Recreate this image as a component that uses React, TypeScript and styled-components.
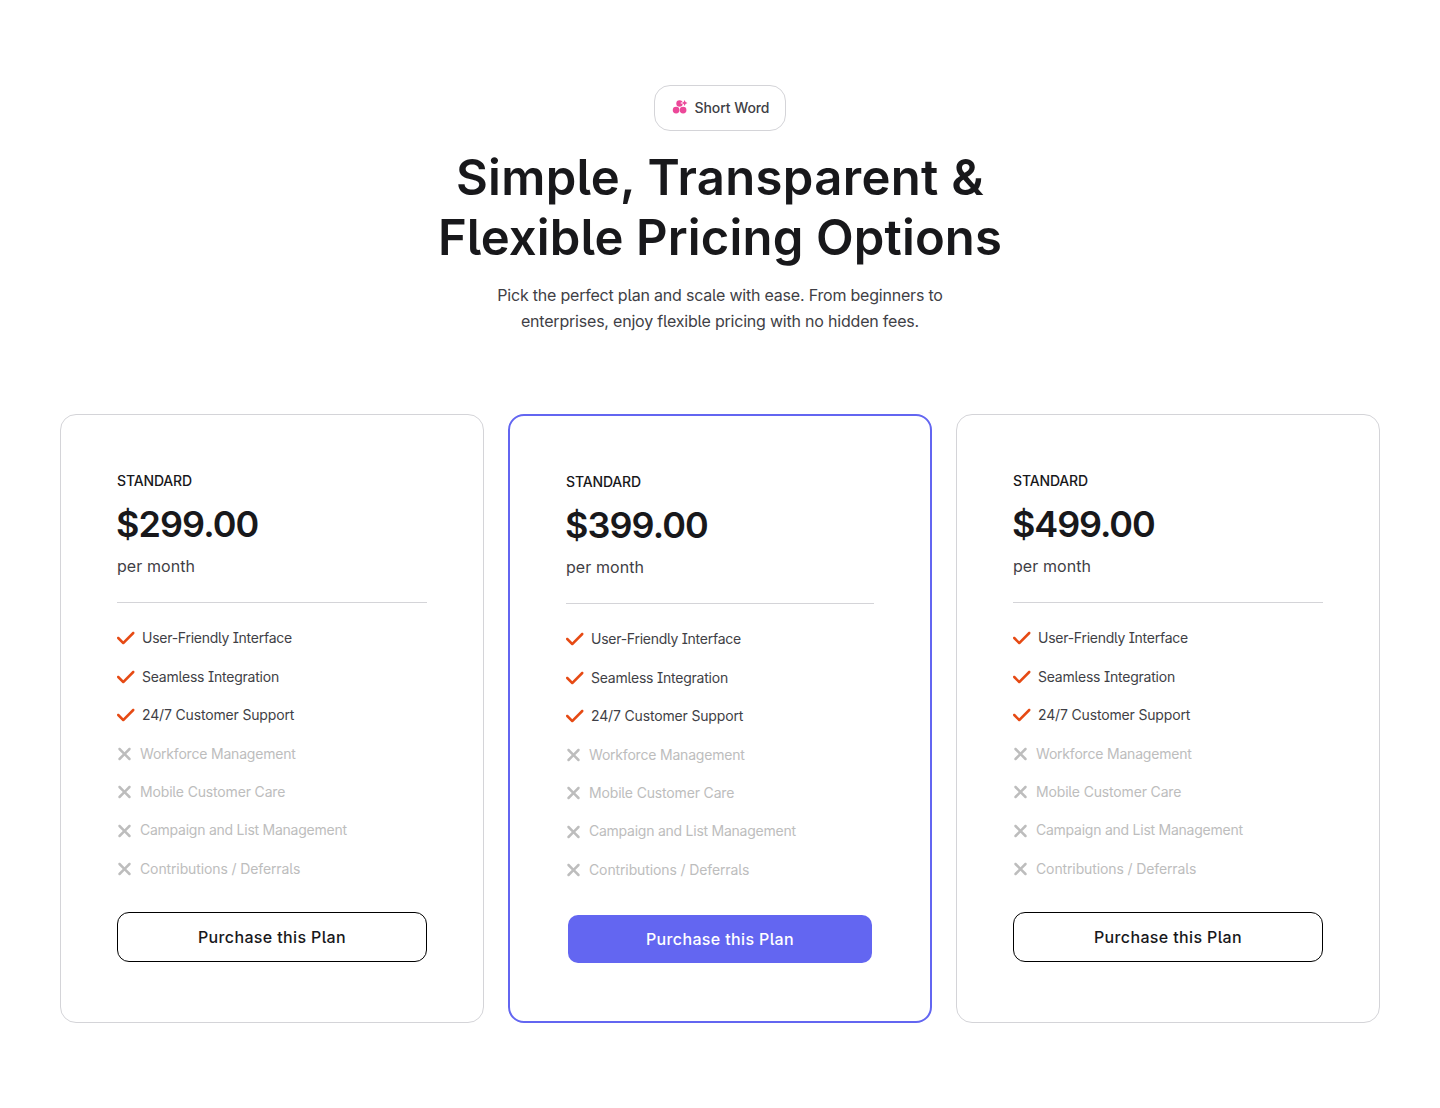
import styled, { createGlobalStyle } from 'styled-components';
import { FaCheck, FaXmark } from 'react-icons/fa6';

interface Feature {
  label: string;
  included: boolean;
  tracking: number; // letter spacing in px
}

interface Plan {
  name: string;
  price: string;
  tracking: number;
  highlighted?: boolean;
}

const FEATURES: Feature[] = [
  { label: 'User-Friendly Interface', included: true, tracking: -0.255 },
  { label: 'Seamless Integration', included: true, tracking: -0.22 },
  { label: '24/7 Customer Support', included: true, tracking: -0.16 },
  { label: 'Workforce Management', included: false, tracking: -0.2 },
  { label: 'Mobile Customer Care', included: false, tracking: -0.16 },
  { label: 'Campaign and List Management', included: false, tracking: -0.245 },
  { label: 'Contributions / Deferrals', included: false, tracking: -0.118 },
];

const PLANS: Plan[] = [
  { name: 'STANDARD', price: '$299.00', tracking: -0.92 },
  { name: 'STANDARD', price: '$399.00', tracking: -0.93, highlighted: true },
  { name: 'STANDARD', price: '$499.00', tracking: -1.11 },
];

function ClusterIcon() {
  return (
    <svg width="16" height="16" viewBox="0 0 16 16" fill="#ec4899">
      <circle cx="4.1" cy="11.1" r="3.35" />
      <circle cx="11.1" cy="11.1" r="3.35" />
      <circle cx="7.5" cy="4.5" r="3.2" />
      <path
        d="M12.6 1.1l.9 2 2 .9-2 .9-.9 2-.9-2-2-.9 2-.9z"
        stroke="#fff"
        strokeWidth="1.2"
        paintOrder="stroke"
      />
    </svg>
  );
}

function PlanCard({ plan }: { plan: Plan }) {
  return (
    <Card $highlighted={plan.highlighted}>
      <PlanName>{plan.name}</PlanName>
      <Price $tracking={plan.tracking}>{plan.price}</Price>
      <Period>per month</Period>
      <Divider />

      <FeatureList>
        {FEATURES.map((feature) => (
          <FeatureItem key={feature.label} $included={feature.included} $tracking={feature.tracking}>
            {feature.included ? <CheckIcon /> : <CrossIcon />}
            {feature.label}
          </FeatureItem>
        ))}
      </FeatureList>

      <PurchaseButton $highlighted={plan.highlighted}>Purchase this Plan</PurchaseButton>
    </Card>
  );
}

export default function App() {
  return (
    <Page>
      <GlobalStyle />
      <Header>
        <Badge>
          <ClusterIcon />
          Short Word
        </Badge>
        <Title>
          <TitleLine $tracking={0.33}>Simple, Transparent &amp;</TitleLine>
          <TitleLine $tracking={0.15}>Flexible Pricing Options</TitleLine>
        </Title>
        <Description>
          Pick the perfect plan and scale with ease. From beginners to
          <br />
          enterprises, enjoy flexible pricing with no hidden fees.
        </Description>
      </Header>

      <Plans>
        {PLANS.map((plan) => (
          <PlanCard key={plan.price} plan={plan} />
        ))}
      </Plans>
    </Page>
  );
}

const GlobalStyle = createGlobalStyle`
  * {
    box-sizing: border-box;
  }

  body {
    margin: 0;
    background: #fff;
    color: #18181b;
    font-family: Inter, 'Liberation Sans', sans-serif;
    font-feature-settings: 'cv05', 'cv08';
  }
`;

const Page = styled.main`
  padding: 85px 60px;
`;

const Header = styled.header`
  display: flex;
  flex-direction: column;
  align-items: center;
  text-align: center;
`;

const Badge = styled.div`
  display: flex;
  align-items: center;
  gap: 6.5px;
  height: 46px;
  padding: 0 15.5px 2px 17px;
  border: 1px solid #d4d4d8;
  border-radius: 16px;
  color: #3f3f46;
  font-size: 14px;
  font-weight: 500;
  letter-spacing: -0.08px;
`;

const Title = styled.h1`
  margin: 17px 0 0;
  font-size: 49px;
  font-weight: 600;
  line-height: 60px;
`;

const TitleLine = styled.span<{ $tracking: number }>`
  display: block;
  letter-spacing: ${(props) => props.$tracking}px;
`;

const Description = styled.p`
  margin: 15px 0 0;
  color: #3f3f46;
  font-size: 16px;
  line-height: 25.6px;
  letter-spacing: -0.205px;
`;

const Plans = styled.section`
  display: grid;
  grid-template-columns: repeat(3, 1fr);
  gap: 24px;
  margin-top: 80px;
`;

const Card = styled.article<{ $highlighted?: boolean }>`
  display: flex;
  flex-direction: column;
  padding: 56px;
  border: ${(props) => (props.$highlighted ? '2px solid #6366f1' : '1px solid #d4d4d8')};
  border-radius: 16px;
`;

const PlanName = styled.div`
  font-size: 14px;
  font-weight: 500;
  line-height: 20.4px;
  letter-spacing: -0.15px;
`;

const Price = styled.div<{ $tracking: number }>`
  margin: 11px 0 8px -1px;
  font-size: 36px;
  font-weight: 600;
  line-height: 43.2px;
  letter-spacing: ${(props) => props.$tracking}px;
`;

const Period = styled.div`
  color: #3f3f46;
  font-size: 16px;
  line-height: 25.6px;
  letter-spacing: 0.07px;
`;

const Divider = styled.hr`
  width: 100%;
  margin: 23px 0 24px;
  border: 0;
  border-top: 1px solid #d4d4d8;
`;

const FeatureList = styled.ul`
  display: flex;
  flex-direction: column;
  gap: 16px;
  margin: 0 0 32px;
  padding: 0;
  list-style: none;
`;

const FeatureItem = styled.li<{ $included: boolean; $tracking: number }>`
  display: flex;
  align-items: center;
  gap: ${(props) => (props.$included ? 7.5 : 8)}px;
  color: ${(props) => (props.$included ? '#3f3f46' : '#bdbdbd')};
  font-size: 14px;
  line-height: 22.4px;
  letter-spacing: ${(props) => props.$tracking}px;
`;

const CheckIcon = styled(FaCheck)`
  width: 17.5px;
  height: 20px;
  margin-bottom: 1px;
  color: #e64a14;
`;

const CrossIcon = styled(FaXmark)`
  width: 15px;
  height: 20px;
  color: #bdbdbd;
`;

// 강조된 카드의 버튼은 투명 테두리로 배경이 2px 안쪽에서 끝남
const PurchaseButton = styled.button<{ $highlighted?: boolean }>`
  display: flex;
  align-items: center;
  justify-content: center;
  height: ${(props) => (props.$highlighted ? 52 : 50)}px;
  padding: 0;
  border: ${(props) => (props.$highlighted ? '2px solid transparent' : '1px solid #000')};
  border-radius: 12px;
  background: ${(props) => (props.$highlighted ? '#6366f1' : 'transparent')};
  background-clip: padding-box;
  color: ${(props) => (props.$highlighted ? '#fff' : '#18181b')};
  font-family: inherit;
  font-feature-settings: inherit;
  font-size: 16px;
  font-weight: 500;
  letter-spacing: 0.36px;
`;
